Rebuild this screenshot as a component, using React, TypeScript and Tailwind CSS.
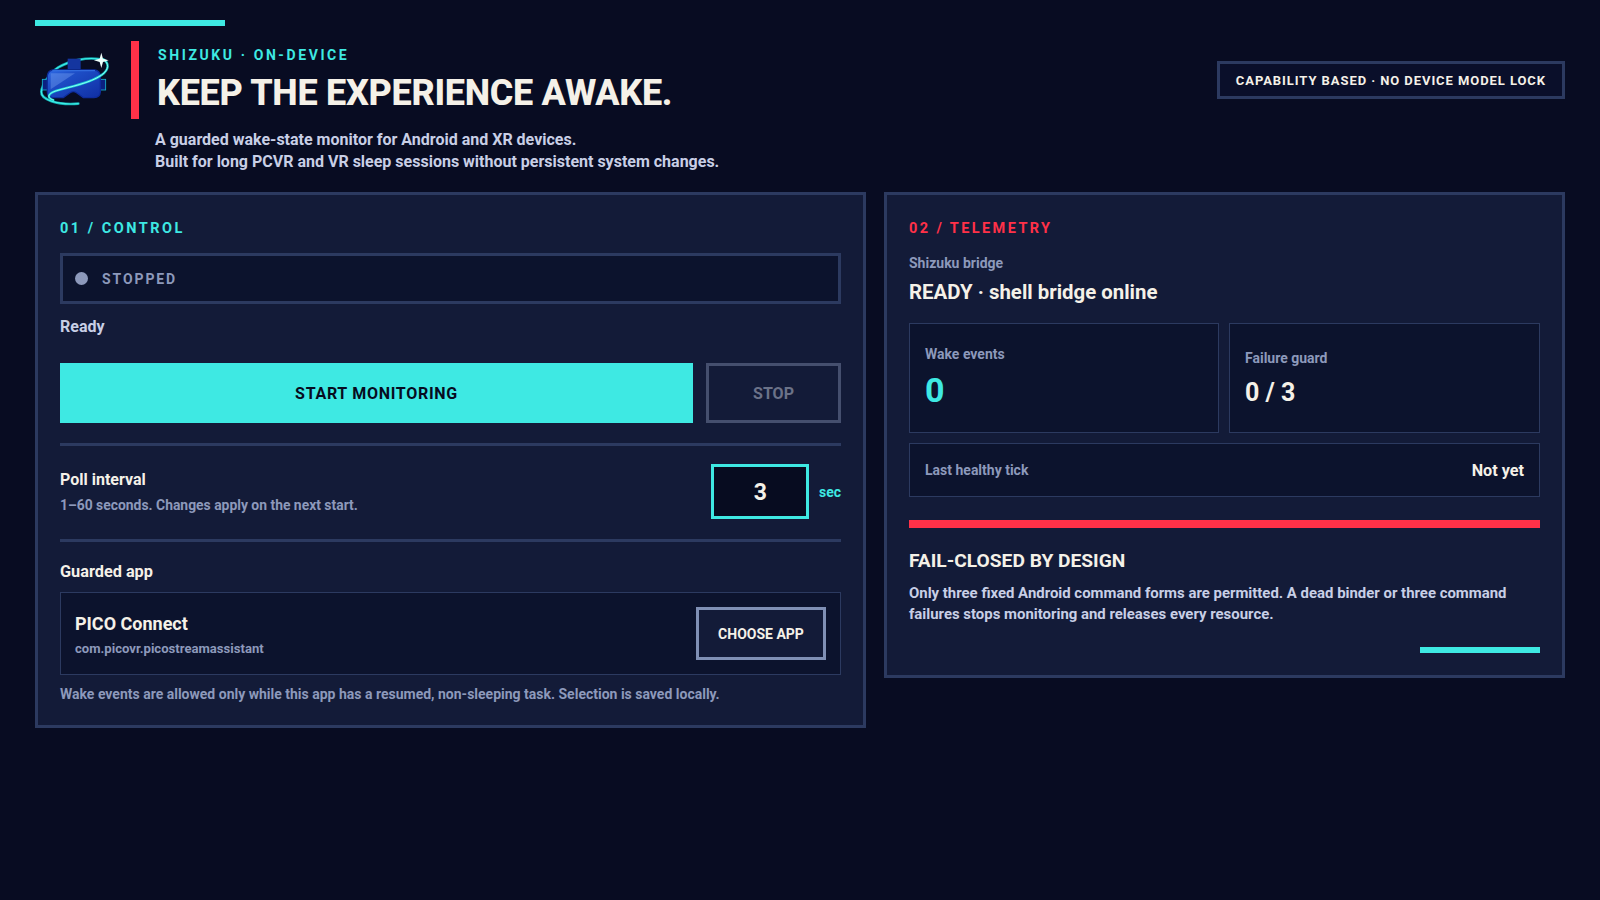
import React from 'react';

const font = { fontFamily: 'Roboto, sans-serif' };

// Headset logo, drawn in the coordinates of a 3x crop of the reference
const HeadsetLogo = () => (
  <svg viewBox="0 0 80 78" className="w-[80px] h-[78px] shrink-0">
    <defs>
      <linearGradient id="visor" x1="0" y1="0" x2="1" y2="1">
        <stop offset="0" stopColor="#2f6ae4" />
        <stop offset="0.3" stopColor="#1e4fc8" />
        <stop offset="1" stopColor="#102fa4" />
      </linearGradient>
    </defs>
    <g transform="translate(-15 -11) scale(0.3333)" fill="none" strokeLinecap="round">
      <path d="M243 88 C200 80 150 92 115 112 C88 130 66 165 64 185 C62 208 110 226 175 221" stroke="#14c0c4" strokeWidth="8" opacity="0.85" />
      <path d="M243 88 C200 80 150 92 115 112 C88 130 66 165 64 185 C62 208 110 226 175 221" stroke="#3cf0e8" strokeWidth="3.5" />
      <rect x="143" y="86" width="39" height="32" fill="#14359f" />
      <rect x="67" y="148" width="16" height="32" fill="#0b2080" stroke="#18b4d0" strokeWidth="2.5" />
      <rect x="240" y="148" width="17" height="32" fill="#0b2080" stroke="#18b4d0" strokeWidth="2.5" />
      <path d="M98 120 H224 Q240 122 241 140 V186 Q240 202 222 203 H190 L172 190 Q160 180 148 190 L130 203 H98 Q83 202 82 186 V138 Q84 122 98 120 Z" fill="url(#visor)" stroke="#0e2c9c" strokeWidth="4" />
      <path d="M98 122 H224" stroke="#3f82f4" strokeWidth="2.5" />
      <path d="M92 130 H165 L92 178 Z" fill="#7ba6f2" opacity="0.4" stroke="none" />
      <path d="M100 210 C78 203 84 190 110 182 C150 170 210 160 245 135 C268 118 268 100 250 88" stroke="#18e0dc" strokeWidth="7" opacity="0.9" />
      <path d="M100 210 C78 203 84 190 110 182 C150 170 210 160 245 135 C268 118 268 100 250 88" stroke="#8ffdf2" strokeWidth="3" />
      <path d="M244 68 L249 86 L266 91 L249 96 L244 114 L239 96 L222 91 L239 86 Z" fill="#effffc" stroke="none" />
    </g>
  </svg>
);

const App = () => {
  return (
    <div className="min-h-[900px] w-full bg-[#080c22] px-[35px] pt-[20px] text-[#f5f1e8]" style={font}>
      <div className="h-[6px] w-[190px] bg-[#3ee9e3]"></div>

      {/* Header */}
      <div className="mt-[15px] flex items-center justify-between">
        <div className="flex items-center">
          <HeadsetLogo />
          <div className="ml-[16px] h-[78px] w-[8px] bg-[#ff3148]"></div>
          <div className="ml-[19px] pt-[3px]">
            <div className="text-[14px] leading-[20px] font-bold tracking-[2.6px] text-[#3ee9e3]">SHIZUKU · ON-DEVICE</div>
            <h1 className="mt-[3px] -ml-[1px] text-[36px] leading-[50px] font-extrabold tracking-[-0.3px] text-[#f5f1e8]">KEEP THE EXPERIENCE AWAKE.</h1>
          </div>
        </div>
        <div className="flex h-[38px] items-center border-[3px] border-[#2c3a60] bg-[#0a0f2a] px-[16px] pt-[1px] text-[13px] font-bold tracking-[0.93px]">
          CAPABILITY BASED · NO DEVICE MODEL LOCK
        </div>
      </div>
      <p className="mt-[10px] ml-[120px] text-[16px] leading-[22px] font-bold text-[#c8cfe6]">
        A guarded wake-state monitor for Android and XR devices.
        <br />
        Built for long PCVR and VR sleep sessions without persistent system changes.
      </p>

      <div className="mt-[19px] grid grid-cols-[831px_681px] items-start gap-[18px]">
        {/* Control panel */}
        <section className="border-[3px] border-[#2c3a60] bg-[#131b38] px-[22px] pt-[24px] pb-[21px]">
          <div className="text-[14.5px] leading-[20px] font-bold tracking-[2.5px] text-[#3ee9e3]">01 / CONTROL</div>
          <div className="mt-[14px] flex h-[51px] items-center border-[3px] border-[#2c3a60] bg-[#0c132d] pl-[12px]">
            <span className="h-[13px] w-[13px] rounded-full bg-[#8d99bb]"></span>
            <span className="ml-[14px] pt-[1px] text-[14px] font-bold tracking-[1.9px] text-[#8d99bb]">STOPPED</span>
          </div>
          <div className="mt-[13px] text-[16px] leading-[20px] font-bold text-[#c8cfe6]">Ready</div>

          <div className="mt-[26px] flex gap-[13px]">
            <button className="h-[60px] flex-1 bg-[#3ee9e3] pt-[1px] text-[16px] font-bold tracking-[0.7px] text-[#070c20]">START MONITORING</button>
            <button className="h-[60px] w-[135px] border-[3px] border-[#454f6e] pt-[1px] text-[16px] font-bold text-[#6b7288]">STOP</button>
          </div>

          <div className="mt-[20px] h-[3px] bg-[#2c3a60]"></div>

          <div className="flex items-center justify-between pt-[18px] pb-[20px]">
            <div>
              <div className="text-[16px] leading-[22px] font-bold">Poll interval</div>
              <div className="mt-[4px] text-[13.9px] leading-[20px] font-bold text-[#8d99bb]">1–60 seconds. Changes apply on the next start.</div>
            </div>
            <div className="flex items-center">
              <input
                readOnly
                value="3"
                className="h-[55px] w-[98px] border-[3px] border-[#3ee9e3] bg-[#070c20] pt-[1px] pl-[1px] text-center text-[23px] font-bold text-[#f5f1e8] outline-none"
              />
              <span className="ml-[10px] pt-[2px] text-[14px] font-bold text-[#3ee9e3]">sec</span>
            </div>
          </div>

          <div className="h-[3px] bg-[#2c3a60]"></div>

          <div className="mt-[20px] text-[16.3px] leading-[20px] font-bold">Guarded app</div>
          <div className="mt-[10px] flex h-[83px] items-center justify-between border border-[#2c3a60] bg-[#0c132d] px-[14px]">
            <div className="pt-[2px]">
              <div className="text-[18px] leading-[24px] font-bold">PICO Connect</div>
              <div className="mt-[4px] text-[13.1px] leading-[18px] font-bold text-[#8d99bb]">com.picovr.picostreamassistant</div>
            </div>
            <button className="h-[53px] w-[130px] border-[3px] border-[#8090b5] bg-[#131b38] pt-[1px] text-[14px] font-bold">CHOOSE APP</button>
          </div>
          <div className="mt-[9px] text-[14px] leading-[20px] font-bold text-[#8d99bb]">
            Wake events are allowed only while this app has a resumed, non-sleeping task. Selection is saved locally.
          </div>
        </section>

        {/* Telemetry panel */}
        <section className="flex flex-col border-[3px] border-[#2c3a60] bg-[#131b38] px-[22px] pt-[24px] pb-[22px]">
          <div className="text-[14.5px] leading-[20px] font-bold tracking-[2.4px] text-[#ff3148]">02 / TELEMETRY</div>
          <div className="mt-[15px] text-[14px] leading-[18px] font-bold text-[#8d99bb]">Shizuku bridge</div>
          <div className="mt-[7px] text-[20.4px] leading-[26px] font-bold">READY · shell bridge online</div>

          <div className="mt-[18px] grid grid-cols-[310px_311px] gap-[10px]">
            <div className="flex h-[110px] flex-col justify-center border border-[#2c3a60] bg-[#0c132d] px-[15px] pb-[2px]">
              <div className="text-[14px] leading-[18px] font-bold text-[#8d99bb]">Wake events</div>
              <div className="mt-[7px] text-[34px] leading-[40px] font-bold text-[#3ee9e3]">0</div>
            </div>
            <div className="flex h-[110px] flex-col justify-center border border-[#2c3a60] bg-[#0c132d] px-[15px]">
              <div className="text-[14px] leading-[18px] font-bold text-[#8d99bb]">Failure guard</div>
              <div className="mt-[11px] text-[25px] leading-[30px] font-bold">0 / 3</div>
            </div>
          </div>
          <div className="mt-[10px] flex h-[54px] items-center justify-between border border-[#2c3a60] bg-[#0c132d] px-[15px]">
            <span className="text-[14px] font-bold text-[#8d99bb]">Last healthy tick</span>
            <span className="pt-[2px] text-[16.2px] font-bold">Not yet</span>
          </div>

          <div className="mt-[23px] h-[8px] bg-[#ff3148]"></div>
          <h2 className="mt-[21px] text-[19.2px] leading-[24px] font-bold">FAIL-CLOSED BY DESIGN</h2>
          <p className="mt-[10px] text-[14.93px] leading-[21px] font-bold text-[#c8cfe6]">
            Only three fixed Android command forms are permitted. A dead binder or three command
            <br />
            failures stops monitoring and releases every resource.
          </p>
          <div className="mt-[22px] h-[6px] w-[120px] self-end bg-[#3ee9e3]"></div>
        </section>
      </div>
    </div>
  );
};

export default App;
